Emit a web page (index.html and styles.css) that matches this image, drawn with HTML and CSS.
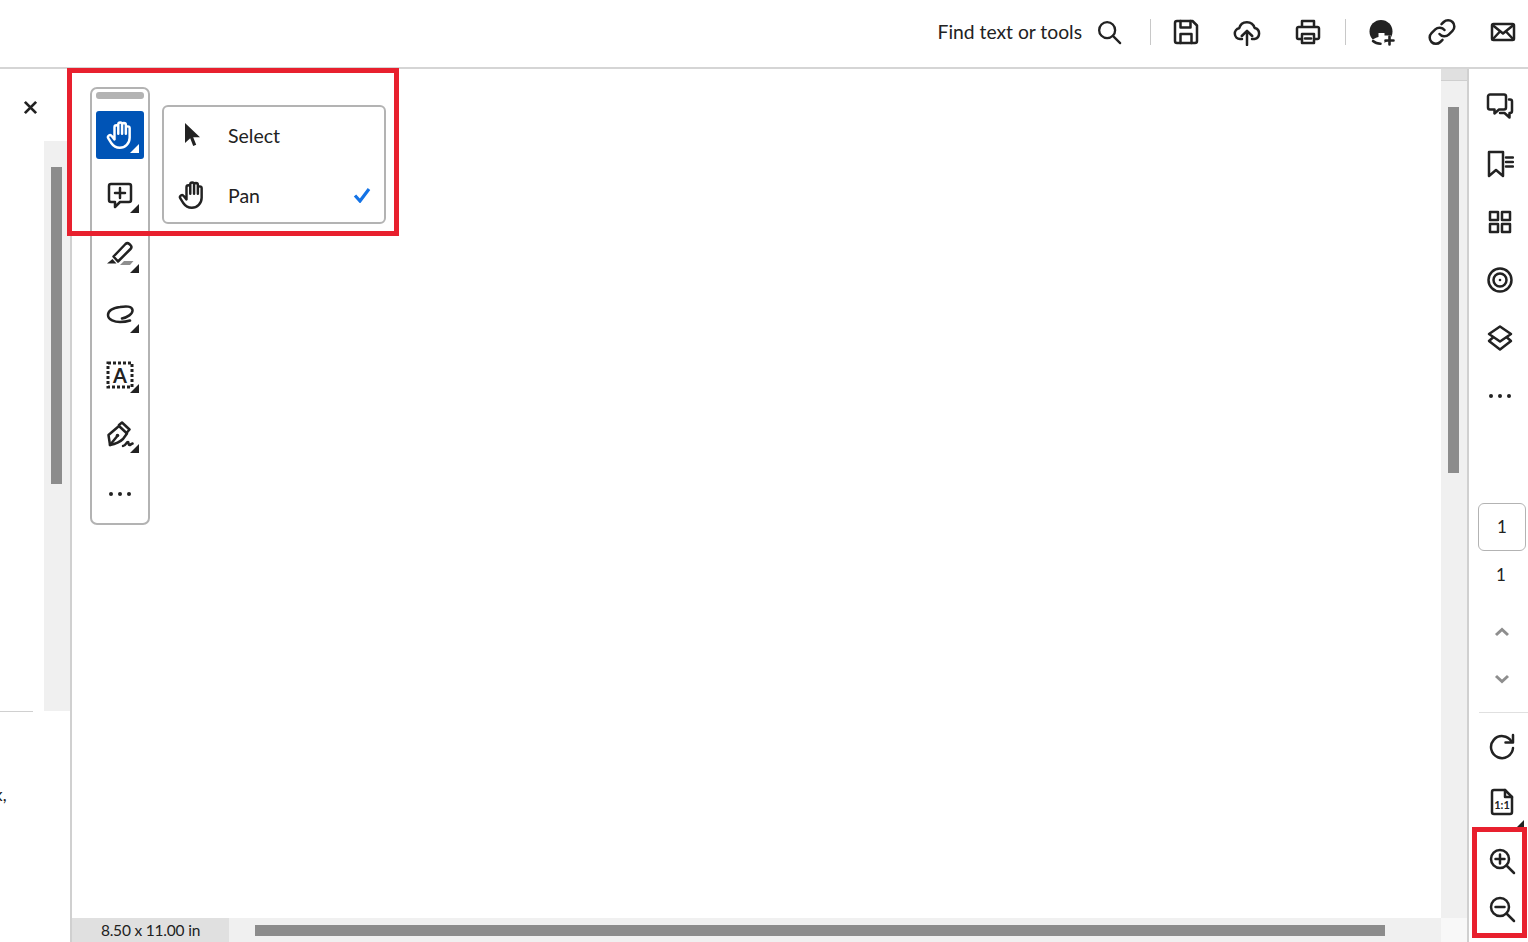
FILE: index.html
```html
<!DOCTYPE html>
<html lang="en">

<head>
    <meta charset="UTF-8">
    <meta name="viewport" content="width=device-width, initial-scale=1.0">
    <title>Document</title>
    <link rel="stylesheet" href="styles.css">
</head>

<body>
    <svg class="defs" width="0" height="0">
        <symbol id="hand" viewBox="0.500 1.500 24 26">
            <path d="M8 14V7a1.700 1.700 0 0 1 3.400 0v6M11.400 13V4.500a1.700 1.700 0 0 1 3.400 0V13M14.800 13V5a1.700 1.700 0 0 1 3.400 0v8M18.200 13V8a1.700 1.700 0 0 1 3.400 0v8.500c0 5-4 9-8.800 9-3.500 0-5.800-1.500-7.500-4L2.500 17a1.800 1.800 0 0 1 3-2L8 18v-4"/>
        </symbol>
    </svg>

    <div class="topbar">
        <span class="find">Find text or tools</span>
        <svg class="ico ico-search" viewBox="0 0 28 28"><circle cx="12" cy="12" r="8.600"/><path d="M18.200 18.200 26 26"/></svg>
        <span class="sep sep-a"></span>
        <svg class="ico ico-save" viewBox="0 0 28 28"><path d="M5 3h15.500L25 7.500V23a2 2 0 0 1-2 2H5a2 2 0 0 1-2-2V5a2 2 0 0 1 2-2z"/><path d="M8.500 3v6.500h10V3M8.500 25v-9h11v9"/></svg>
        <svg class="ico ico-top" viewBox="0 0 28 28"><path d="M9 21H7a5.400 5.400 0 0 1-.8-10.700A8 8 0 0 1 21.600 10 5.600 5.600 0 0 1 21.500 21H19"/><path d="M14 27V13M8.800 18 14 12.800l5.200 5.200"/></svg>
        <svg class="ico ico-top" viewBox="0 0 28 28"><path d="M8 9V3h12v6M8 21H4.500A1.500 1.500 0 0 1 3 19.500V10.500A1.500 1.500 0 0 1 4.500 9h19a1.500 1.500 0 0 1 1.500 1.500v9a1.500 1.500 0 0 1-1.500 1.500H20"/><path d="M8 16h12v9H8z"/><path d="M11 20.500h6"/></svg>
        <span class="sep sep-b"></span>
        <svg class="ico ico-user" viewBox="0 0 28 28"><circle class="fill" cx="13" cy="13.500" r="11.500"/><path class="fill-white" d="M10.500 15v4c-2.500.5-4.500 1.500-6 3 2 2.200 5 3.500 8.500 3.500h3l1-3 6-1v-4h-6.500v-2.500z"/><path d="M5 23c2 1.800 4.500 2.700 7.500 2.700"/><path class="user-plus" d="M21.500 18.500v8M17.500 22.500h8"/></svg>
        <svg class="ico ico-link" viewBox="0 0 28 28"><path d="M11.500 16a6.200 6.200 0 0 0 9.200.6l3.800-3.800a6.200 6.200 0 0 0-8.800-8.800l-2.200 2.200"/><path d="M16.500 12a6.200 6.200 0 0 0-9.200-.6l-3.800 3.800a6.200 6.200 0 0 0 8.800 8.800l2.200-2.200"/></svg>
        <svg class="ico ico-mail" viewBox="0 0 28 28"><rect x="3" y="6" width="22" height="16" rx="1.500"/><path d="M3.500 7 14 15.500 24.500 7M3.500 21.500l7.500-8M24.500 21.500l-7.500-8"/></svg>
    </div>

    <div class="main">
        <div class="left">
            <div class="left-head">
                <svg class="close" viewBox="0 0 12 12"><path d="M1.500 1.500l9 9M10.500 1.500l-9 9"/></svg>
            </div>
            <div class="left-track"><div class="left-thumb"></div></div>
            <div class="left-rule"></div>
            <div class="left-text">k,</div>
        </div>

        <div class="center">
            <div class="viewer">
                <div class="page"></div>
                <div class="vscroll">
                    <div class="vscroll-btn"></div>
                    <div class="vscroll-thumb"></div>
                </div>
            </div>
            <div class="hbar">
                <div class="hbar-size">8.50 x 11.00 in</div>
                <div class="hbar-track"><div class="hbar-thumb"></div></div>
                <div class="hbar-corner"></div>
            </div>
        </div>

        <div class="rail">
            <div class="rail-btn">
                <svg class="ico" viewBox="0 0 28 28"><path d="M4 2.500h14a2 2 0 0 1 2 2v11a2 2 0 0 1-2 2h-5l-4.500 4v-4H4a2 2 0 0 1-2-2v-11a2 2 0 0 1 2-2z"/><path d="M23 7.500h1a2 2 0 0 1 2 2v9.500a2 2 0 0 1-2 2h-.5v4.500l-5-4.500H14"/></svg>
            </div>
            <div class="rail-btn">
                <svg class="ico" viewBox="0 0 28 28"><path d="M3 2h14v24l-7-6-7 6z"/><path d="M20 7.500h7M20 12h7M20 16.500h7"/></svg>
            </div>
            <div class="rail-btn">
                <svg class="ico" viewBox="0 0 28 28"><rect x="4" y="4" width="8" height="8"/><rect x="16" y="4" width="8" height="8"/><rect x="4" y="16" width="8" height="8"/><rect x="16" y="16" width="8" height="8"/></svg>
            </div>
            <div class="rail-btn">
                <svg class="ico" viewBox="0 0 28 28"><circle cx="14" cy="14" r="11.500"/><circle cx="14" cy="14" r="6.500"/><circle class="fill" cx="14" cy="14" r="1.300"/></svg>
            </div>
            <div class="rail-btn">
                <svg class="ico" viewBox="0 0 28 28"><path d="M14 2.500 25 10l-11 7.500L3 10z"/><path d="M7 13.500 3 17l11 8.500L25 17l-4-3.500"/></svg>
            </div>
            <div class="rail-btn">
                <div class="dots"><i></i><i></i><i></i></div>
            </div>

            <div class="page-box">1</div>
            <div class="page-total">1</div>
            <div class="chevron chevron-first">
                <svg viewBox="0 0 16 10"><path d="M2 8l6-5.500L14 8"/></svg>
            </div>
            <div class="chevron">
                <svg viewBox="0 0 16 10"><path d="M2 2l6 5.500L14 2"/></svg>
            </div>
            <div class="rail-rule"></div>

            <div class="rail-btn rail-btn-low">
                <svg class="ico" viewBox="0 0 28 28"><path d="M23.500 9.500A11 11 0 1 0 25 16"/><path d="M25 3v7.500h-7.500"/></svg>
            </div>
            <div class="rail-btn rail-btn-low has-arrow">
                <svg class="ico" viewBox="0 0 28 28"><path d="M6 2h11l7 7v15a2 2 0 0 1-2 2H6a2 2 0 0 1-2-2V4a2 2 0 0 1 2-2z"/><path d="M17 2v7h7"/><text class="one-one" x="14" y="21" text-anchor="middle">1:1</text></svg>
                <span class="arrow"></span>
            </div>
            <div class="rail-btn rail-btn-zoom">
                <svg class="ico" viewBox="0 0 28 28"><circle cx="12" cy="12" r="9"/><path d="M18.500 18.500 26 26M12 7.500v9M7.500 12h9"/></svg>
            </div>
            <div class="rail-btn rail-btn-end">
                <svg class="ico" viewBox="0 0 28 28"><circle cx="12" cy="12" r="9"/><path d="M18.500 18.500 26 26M7.500 12h9"/></svg>
            </div>
        </div>
    </div>

    <!-- floating tools -->
    <div class="tools">
        <div class="grip"></div>
        <div class="tool tool-active">
            <svg class="ico ico-hand"><use href="#hand"/></svg>
            <span class="arrow"></span>
        </div>
        <div class="tool">
            <svg class="ico" viewBox="0 0 28 28"><path d="M5 3h18a2 2 0 0 1 2 2v14a2 2 0 0 1-2 2h-9l-5 5v-5H5a2 2 0 0 1-2-2V5a2 2 0 0 1 2-2z"/><path d="M14 7v10M9 12h10"/></svg>
            <span class="arrow"></span>
        </div>
        <div class="tool">
            <svg class="ico" viewBox="0 0 28 28"><path d="M7.500 15.500 19.500 3a2.700 2.700 0 0 1 3.800 0l1.200 1.200a2.700 2.700 0 0 1 0 3.800L12 20.500z"/><path class="fill" d="M6.500 18l4 4.500H1z"/><path class="fill-grey" d="M14 24l4-4h9.500l-3.500 4z"/></svg>
            <span class="arrow"></span>
        </div>
        <div class="tool">
            <svg class="ico" viewBox="0 0 28 28"><path d="M16 17.500C21 16.500 27 13 26.500 9 26 5 20 5 14 6 7 7 2 10 2 14c0 5 7 7 12 7 4 0 7-.5 10-1.500"/></svg>
            <span class="arrow"></span>
        </div>
        <div class="tool">
            <svg class="ico" viewBox="0 0 28 28"><rect class="dashed" x="2" y="2" width="24" height="24"/><text class="tool-a" x="14" y="21.500" text-anchor="middle">A</text></svg>
            <span class="arrow"></span>
        </div>
        <div class="tool">
            <svg class="ico" viewBox="0 0 28 28"><path d="M4 24 2.500 14 13 5l8 7.500L17 18c-3 3-8 5-13 6z"/><path d="M13 4l3-2.500 7.500 7-3 3.500M4 24l6.500-8"/><circle class="fill" cx="11.500" cy="14.500" r="1.800"/><path d="M17 25c3 0 3-4 5-4 1 0 0 3 1.500 3 1 0 1.500-1 3-1.500"/></svg>
            <span class="arrow"></span>
        </div>
        <div class="tool tool-more">
            <div class="dots"><i></i><i></i><i></i></div>
        </div>
    </div>

    <div class="menu">
        <div class="menu-item">
            <span class="menu-icon">
                <svg class="ico" viewBox="0 0 28 28"><path class="fill" d="M8 1v20l5.200-4.800 3 7.800 3-1.300-3-7.500H23z"/></svg>
            </span>
            <span class="menu-label">Select</span>
        </div>
        <div class="menu-item">
            <span class="menu-icon"><svg class="ico ico-hand"><use href="#hand"/></svg></span>
            <span class="menu-label">Pan</span>
            <svg class="check" viewBox="0 0 18 16"><path d="M2 8.500 7 14 16 2"/></svg>
        </div>
    </div>

    <div class="mark mark-tools"></div>
    <div class="mark mark-zoom"></div>
</body>

</html>
```

FILE: styles.css
```css
* {
    box-sizing: border-box;
}

html,
body {
    margin: 0;
    height: 942px;
    overflow: hidden;
}

body {
    display: flex;
    flex-direction: column;
    position: relative;
    background: #fff;
    color: #222;
    font-family: Lato, "Noto Sans", sans-serif;
}

.defs {
    position: absolute;
}

.ico {
    width: 28px;
    height: 28px;
    flex: none;
    fill: none;
    stroke: #222;
    stroke-width: 2.500;
    stroke-linejoin: round;
    stroke-linecap: round;
}

.ico-hand {
    width: 27px;
    height: 29px;
    stroke-width: 2.200;
}

.fill {
    fill: #222;
    stroke: none;
}

.fill-grey {
    fill: #8e8e8e;
    stroke: none;
}

.fill-white {
    fill: #fff;
    stroke: none;
}

.user-plus {
    stroke-width: 2.600;
}

/* top bar */
.topbar {
    display: flex;
    align-items: center;
    justify-content: flex-end;
    flex: none;
    height: 69px;
    padding: 0 11px 4px 0;
    border-bottom: 2px solid #d5d5d5;
}

.find {
    font-size: 19.300px;
    white-space: nowrap;
}

.ico-search {
    width: 26px;
    height: 26px;
    margin-left: 14px;
    margin-right: 2px;
}

.sep {
    flex: none;
    width: 1px;
    height: 26px;
    background: #c8c8c8;
}

.sep-a {
    margin-left: 26px;
}

.ico-save {
    margin-left: 21px;
}

.ico-top {
    margin-left: 33px;
}

.sep-b {
    margin-left: 23px;
}

.ico-user {
    margin-left: 22px;
}

.ico-link {
    margin-left: 32px;
}

.ico-mail {
    margin-left: 33px;
}

/* main area */
.main {
    display: flex;
    flex: 1;
    min-height: 0;
}

.left {
    flex: none;
    width: 72px;
    border-right: 2px solid #d0d0d0;
    overflow: hidden;
}

.left-head {
    display: flex;
    align-items: center;
    height: 72px;
    padding: 4px 0 0 23px;
}

.close {
    width: 15px;
    height: 15px;
    fill: none;
    stroke: #222;
    stroke-width: 2.200;
}

.left-track {
    height: 570px;
    margin-left: 44px;
    padding: 26px 0 0 7px;
    background: #f0f0f0;
}

.left-thumb {
    width: 11px;
    height: 317px;
    background: #8c8c8c;
}

.left-rule {
    width: 33px;
    height: 1px;
    background: #d0d0d0;
}

.left-text {
    margin: 73px 0 0 -6px;
    font-size: 17px;
    line-height: 20px;
}

.center {
    display: flex;
    flex-direction: column;
    flex: none;
    width: 1397px;
    border-right: 2px solid #d0d0d0;
}

.viewer {
    display: flex;
    flex: 1;
    min-height: 0;
}

.page {
    flex: 1;
}

.vscroll {
    flex: none;
    width: 26px;
    background: #f0f0f0;
}

.vscroll-btn {
    height: 12px;
    background: #e0e0e0;
    border-bottom: 1px solid #cfcfcf;
}

.vscroll-thumb {
    width: 11px;
    height: 366px;
    margin: 26px 0 0 7px;
    background: #8c8c8c;
}

.hbar {
    display: flex;
    flex: none;
    height: 24px;
    background: #f0f0f0;
}

.hbar-size {
    flex: none;
    width: 157px;
    background: #e0e0e0;
    font-size: 15.500px;
    line-height: 24px;
    text-align: center;
    letter-spacing: -0.200px;
}

.hbar-track {
    flex: 1;
    padding: 7px 56px 0 26px;
}

.hbar-thumb {
    height: 11px;
    background: #8c8c8c;
}

.hbar-corner {
    flex: none;
    width: 26px;
    background: #f8f8f8;
}

/* right rail */
.rail {
    display: flex;
    flex-direction: column;
    align-items: center;
    flex: 1;
    padding-top: 8px;
}

.rail-btn {
    display: flex;
    align-items: center;
    justify-content: center;
    position: relative;
    flex: none;
    width: 48px;
    height: 58px;
    margin-left: 3px;
}

.rail-btn-low {
    height: 56px;
    margin-left: 7px;
}

.rail-btn-zoom {
    margin-left: 7px;
    padding-top: 4px;
}

.rail-btn-end {
    height: 38px;
    margin-left: 7px;
    padding-top: 4px;
}

.dots {
    display: flex;
    gap: 5px;
}

.dots i {
    width: 4px;
    height: 4px;
    border-radius: 50%;
    background: #222;
}

.page-box {
    width: 48px;
    height: 48px;
    margin: 78px 0 0 7px;
    border: 1px solid #b3b3b3;
    border-radius: 6px;
    font-size: 17px;
    line-height: 46px;
    text-align: center;
}

.page-total {
    height: 48px;
    margin-left: 5px;
    font-size: 17px;
    line-height: 48px;
}

.chevron {
    display: flex;
    align-items: center;
    justify-content: center;
    height: 47px;
    margin-left: 7px;
}

.chevron-first {
    margin-top: 9px;
}

.chevron svg {
    width: 16px;
    height: 10px;
    fill: none;
    stroke: #8e8e8e;
    stroke-width: 3;
}

.rail-rule {
    flex: none;
    width: 49px;
    height: 1px;
    margin: 10px 0 5px 9px;
    background: #e0e0e0;
}

.one-one {
    font-size: 11px;
    font-weight: 700;
    fill: #222;
    stroke: none;
}

/* floating tool strip */
.tools {
    position: absolute;
    left: 90px;
    top: 87px;
    width: 60px;
    height: 438px;
    padding: 3px 4px 0;
    background: #fff;
    border: 2px solid #b3b3b3;
    border-radius: 7px;
}

.grip {
    height: 7px;
    margin-bottom: 12px;
    border-radius: 3px;
    background: #b3b3b3;
}

.tool {
    display: flex;
    align-items: center;
    justify-content: center;
    position: relative;
    height: 48px;
    margin-bottom: 12px;
    padding-right: 1px;
    border-radius: 3px;
}

.tool-active {
    background: #0054b6;
}

.tool-active .ico {
    stroke: #fff;
}

.tool-active .arrow {
    background: #fff;
}

.tool-more {
    height: 46px;
}

.arrow {
    position: absolute;
    right: 5px;
    bottom: 6px;
    width: 9px;
    height: 9px;
    background: #222;
    clip-path: polygon(100% 0, 100% 100%, 0 100%);
}

.rail-btn .arrow {
    right: 2px;
    bottom: 1px;
}

.dashed {
    stroke-dasharray: 3 2;
    stroke-linecap: butt;
    stroke-linejoin: miter;
    stroke-width: 3;
}

.tool-a {
    font-size: 20px;
    font-weight: 700;
    fill: #222;
    stroke: none;
}

/* pop-out menu */
.menu {
    position: absolute;
    left: 162px;
    top: 105px;
    display: flex;
    flex-direction: column;
    gap: 6px;
    width: 224px;
    height: 119px;
    padding-top: 2px;
    background: #fff;
    border: 2px solid #b3b3b3;
    border-radius: 6px;
}

.menu-item {
    display: flex;
    align-items: center;
    height: 54px;
    padding: 0 14px 0 13px;
    font-size: 19.500px;
}

.menu-icon {
    display: flex;
    justify-content: center;
    flex: none;
    width: 28px;
}

.menu-label {
    flex: 1;
    margin-left: 23px;
}

.check {
    flex: none;
    width: 18px;
    height: 16px;
    margin-right: -1px;
    fill: none;
    stroke: #1473e6;
    stroke-width: 3.200;
}

/* red annotation boxes */
.mark {
    position: absolute;
    border: 5px solid #e8202e;
}

.mark-tools {
    left: 67px;
    top: 68px;
    width: 332px;
    height: 168px;
}

.mark-zoom {
    left: 1472px;
    top: 827px;
    width: 55px;
    height: 111px;
}
```
